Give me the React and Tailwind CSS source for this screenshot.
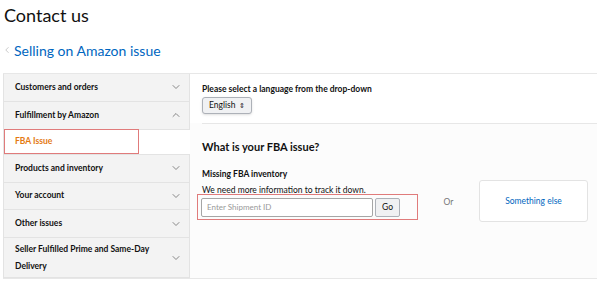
import React from 'react';
import { ChevronDown, ChevronUp, ChevronLeft } from 'lucide-react';

const topics = [
  { label: 'Customers and orders', open: false },
  { label: 'Fulfillment by Amazon', open: true, children: ['FBA Issue'] },
  { label: 'Products and inventory', open: false },
  { label: 'Your account', open: false },
  { label: 'Other issues', open: false },
  { label: 'Seller Fulfilled Prime and Same-Day Delivery', open: false },
];

const App = () => {
  return (
    <div className="w-[597px] h-[282px] bg-white overflow-hidden font-['Lato',sans-serif] text-[#111]">
      <h1 className="pl-[4px] pt-[4px] text-[18px] leading-[22px] text-[#111]">Contact us</h1>

      <div className="flex items-center gap-[2px] pl-[2px] mt-[14px] h-[20px]">
        <ChevronLeft size={10} strokeWidth={1.5} className="text-[#aaa]" />
        <span className="text-[14px] text-[#0066c0]">Selling on Amazon issue</span>
      </div>

      <div className="mt-[13px] ml-[3px] flex border-t border-b border-[#e7e7e7] h-[206px]">
        {/* Sidebar */}
        <div className="w-[187px] bg-[#f3f3f3] border-l border-r border-[#e3e3e3] flex flex-col">
          {topics.map((t) => (
            <React.Fragment key={t.label}>
              <div
                className={
                  'flex items-center justify-between pl-[11px] pr-[7px] border-b border-[#e3e3e3] ' +
                  (t.label.length > 30 ? 'h-[40px]' : 'h-[28px]')
                }
              >
                <span className="text-[8.5px] font-bold leading-[17px] w-[152px]">{t.label}</span>
                {t.open ? (
                  <ChevronUp size={12} strokeWidth={1.75} className="text-[#777]" />
                ) : (
                  <ChevronDown size={12} strokeWidth={1.75} className="text-[#777]" />
                )}
              </div>
              {t.children &&
                t.children.map((c) => (
                  <div key={c} className="h-[25px] bg-white -mr-px flex items-center border-b border-[#e3e3e3]">
                    <div className="w-[135px] h-[25px] border border-[#e07b7b] flex items-center pl-[10px]">
                      <span className="text-[8.5px] font-bold text-[#e47911]">{c}</span>
                    </div>
                  </div>
                ))}
            </React.Fragment>
          ))}
        </div>

        {/* Content */}
        <div className="flex-1 flex flex-col">
          <div className="bg-white pl-[12px] pt-[10px] h-[49px]">
            <div className="text-[8.5px] font-bold leading-[11px]">Please select a language from the drop-down</div>
            <button className="mt-[2px] h-[17px] px-[6px] flex items-center gap-[4px] text-[8.5px] bg-[#f0f1f3] border border-[#adb1b8] rounded-[3px] shadow-sm">
              English <span className="text-[7px] leading-none">⇕</span>
            </button>
          </div>
          <div className="flex-1 bg-[#fcfcfc] flex flex-col">
            <div className="ml-[12px] border-t border-[#e7e7e7]" />
            <div className="pl-[12px] pt-[16px]">
              <h2 className="text-[11px] font-bold leading-[14px]">What is your FBA issue?</h2>
            </div>
            <div className="flex items-start pl-[7px] mt-[15px]">
              <div className="w-[221px]">
                <div className="pl-[5px] text-[8.5px] font-bold leading-[11px]">Missing FBA inventory</div>
                <div className="pl-[5px] mt-[5px] text-[8.5px] leading-[11px]">We need more information to track it down.</div>
                <div className="h-[26px] -mt-[2px] border border-[#e07b7b] flex items-center pl-[3px] gap-[2px]">
                  <div className="w-[172px] h-[19px] bg-white border border-[#a6a6a6] rounded-[2px] flex items-center pl-[5px] text-[8px] text-[#999]">
                    Enter Shipment ID
                  </div>
                  <div className="w-[25px] h-[19px] bg-[#f0f1f3] border border-[#adb1b8] rounded-[2px] flex items-center justify-center text-[8.5px]">
                    Go
                  </div>
                </div>
              </div>
              <div className="w-[61px] flex justify-center mt-[28px] text-[8.5px] leading-[11px] text-[#777]">Or</div>
              <div className="w-[109px] h-[42px] mt-[11px] bg-white border border-[#e3e3e3] rounded-[3px] flex items-center justify-center text-[8.5px] text-[#0066c0]">
                Something else
              </div>
            </div>
          </div>
        </div>
      </div>
    </div>
  );
};

export default App;
